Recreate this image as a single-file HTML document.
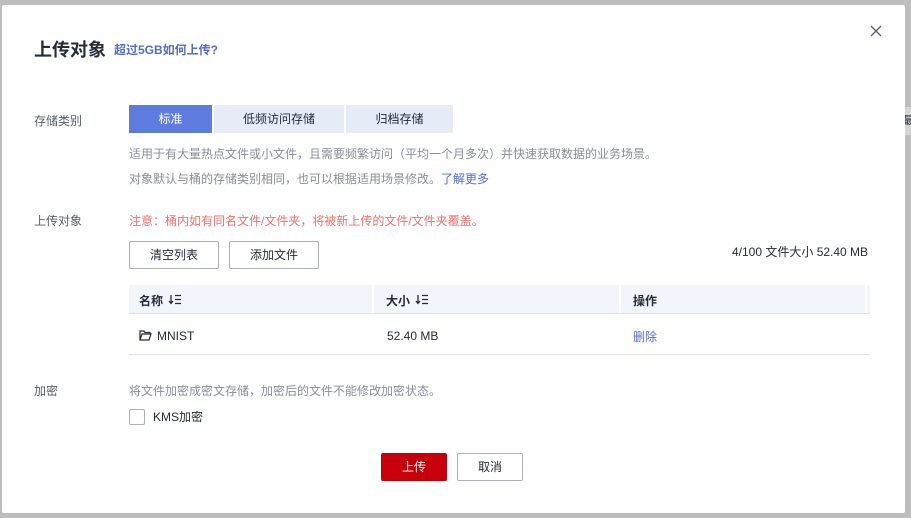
<!DOCTYPE html>
<html><head><meta charset="utf-8"><style>
*{margin:0;padding:0;box-sizing:border-box}
body{width:911px;height:518px;background:#bdbdbd;position:relative;overflow:hidden;font-family:"Liberation Sans","Noto Sans CJK SC",sans-serif;font-size:12px;color:#252b3a}
.m{position:absolute;left:2px;top:5px;width:903px;height:508px;background:#fff;border-radius:2px}
.a{position:absolute;white-space:nowrap}
.lbl{color:#575d6c;font-size:12px}
.seg{position:absolute;top:105px;height:28px;line-height:28px;text-align:center;font-size:12px;background:#e6ebf8;color:#252b3a}
.btn{position:absolute;height:28px;line-height:26px;text-align:center;border:1px solid #adb0b8;border-radius:2px;background:#fff;font-size:12px}
.g{color:#8a8e99}
</style></head><body>
<div style="position:absolute;right:0;top:107px;width:8px;height:28px;background:#d5d5d5;font-size:11px;line-height:28px">最</div>
<div class="m"></div>
<div class="a" style="left:34px;top:36px;font-size:18px;font-weight:bold;color:#252b3a">上传对象</div>
<div class="a" style="left:114px;top:41px;font-size:12px;font-weight:bold;color:#526ecc">超过5GB如何上传?</div>
<svg class="a" style="left:870px;top:25px" width="12" height="12" viewBox="0 0 12 12"><path d="M1 1L11 11M11 1L1 11" stroke="#575d6c" stroke-width="1.3"/></svg>
<div class="a lbl" style="left:34px;top:112px">存储类别</div>
<div class="seg" style="left:129px;width:83px;background:#5e7ce0;color:#fff">标准</div>
<div class="seg" style="left:214px;width:130px">低频访问存储</div>
<div class="seg" style="left:346px;width:107px">归档存储</div>
<div class="a g" style="left:129px;top:145px">适用于有大量热点文件或小文件，且需要频繁访问（平均一个月多次）并快速获取数据的业务场景。</div>
<div class="a g" style="left:129px;top:170px">对象默认与桶的存储类别相同，也可以根据适用场景修改。<span style="color:#526ecc">了解更多</span></div>
<div class="a lbl" style="left:34px;top:212px">上传对象</div>
<div class="a" style="left:129px;top:212px;color:#f66f6a">注意：桶内如有同名文件/文件夹，将被新上传的文件/文件夹覆盖。</div>
<div class="btn" style="left:129px;top:241px;width:90px">清空列表</div>
<div class="btn" style="left:229px;top:241px;width:90px">添加文件</div>
<div class="a" style="left:732px;top:243px;color:#252b3a">4/100 文件大小 52.40 MB</div>
<div class="a" style="left:129px;top:285px;width:741px;height:29px;background:#f2f5fc;border-bottom:1px solid #dfe1e6"></div>
<div class="a" style="left:372px;top:285px;width:2px;height:28px;background:#fff"></div>
<div class="a" style="left:619px;top:285px;width:2px;height:28px;background:#fff"></div>
<div class="a" style="left:865px;top:285px;width:2px;height:28px;background:#fff"></div>
<div class="a" style="left:139px;top:292px;font-weight:bold">名称</div>
<svg class="a" style="left:168px;top:294px" width="14" height="11" viewBox="0 0 14 11"><path d="M3 1v8M1 7l2 2.5 2-2.5M7 1.5h6M7 5.5h6M7 9.5h6" fill="none" stroke="#252b3a" stroke-width="1.3"/></svg>
<div class="a" style="left:386px;top:292px;font-weight:bold">大小</div>
<svg class="a" style="left:415px;top:294px" width="14" height="11" viewBox="0 0 14 11"><path d="M3 1v8M1 7l2 2.5 2-2.5M7 1.5h6M7 5.5h6M7 9.5h6" fill="none" stroke="#252b3a" stroke-width="1.3"/></svg>
<div class="a" style="left:633px;top:292px;font-weight:bold">操作</div>
<svg class="a" style="left:139px;top:330px" width="13" height="11" viewBox="0 0 13 11"><path d="M1 10V1h4l1 1.5h5V4M1 10h9l2-6H3L1 10z" fill="none" stroke="#252b3a" stroke-width="1.2"/></svg>
<div class="a" style="left:157px;top:329px">MNIST</div>
<div class="a" style="left:387px;top:329px">52.40 MB</div>
<div class="a" style="left:633px;top:328px;color:#526ecc">删除</div>
<div class="a" style="left:129px;top:354px;width:741px;height:1px;background:#dfe1e6"></div>
<div class="a lbl" style="left:34px;top:382px">加密</div>
<div class="a g" style="left:129px;top:382px">将文件加密成密文存储，加密后的文件不能修改加密状态。</div>
<div class="a" style="left:129px;top:409px;width:16px;height:16px;border:1px solid #adb0b8;border-radius:2px"></div>
<div class="a" style="left:153px;top:408px">KMS加密</div>
<div class="a" style="left:381px;top:453px;width:66px;height:28px;line-height:28px;text-align:center;background:#c7000b;color:#fff;border-radius:2px">上传</div>
<div class="btn" style="left:457px;top:453px;width:66px">取消</div>
</body></html>
